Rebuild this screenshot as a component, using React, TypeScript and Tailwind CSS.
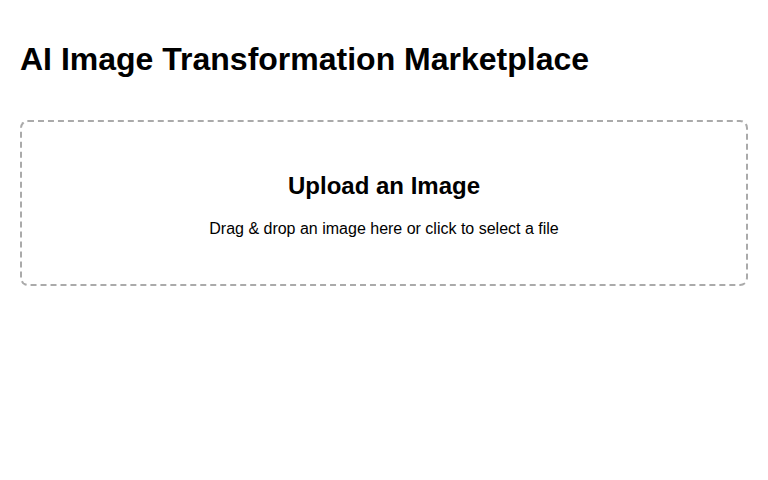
export default function App() {
  return (
    <div className="p-5 font-['Liberation_Sans',Arial,sans-serif] text-black">
      <h1 className="mt-[21.44px] mb-[41.8px] text-[32px] font-bold leading-[normal]">
        AI Image Transformation Marketplace
      </h1>
      <div className="cursor-pointer rounded-lg border-2 border-dashed border-[#aaa] p-[30px] text-center">
        <h2 className="my-[19.92px] text-[24px] font-bold leading-[normal]">Upload an Image</h2>
        <p className="my-4 text-base leading-[normal]">
          Drag &amp; drop an image here or click to select a file
        </p>
      </div>
    </div>
  );
}
